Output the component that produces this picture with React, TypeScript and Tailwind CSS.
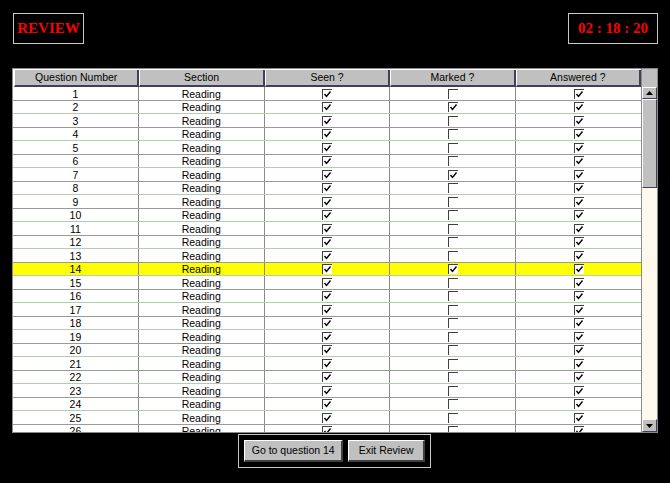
import React from 'react'

const ROWS = Array.from({ length: 26 }, (_, i) => i + 1)
const MARKED = [2, 7, 14]
const CURRENT = 14

function Check({ on }: { on: boolean }) {
  return (
    <span className="inline-block w-[10px] h-[10px] bg-white border-t border-l border-[#404040] relative">
      {on && (
        <svg width="9" height="9" viewBox="0 0 9 9" className="absolute left-0 top-0">
          <path d="M1.5 4 L3.5 6.5 L7.5 1.5" fill="none" stroke="#000" strokeWidth="1.4" />
        </svg>
      )}
    </span>
  )
}

function Cell({ children, last }: { children: React.ReactNode; last?: boolean }) {
  return (
    <div className={`flex-1 flex items-center justify-center pt-px ${last ? '' : 'border-r border-[#8a8a8a]'}`}>
      {children}
    </div>
  )
}

export default function App() {
  return (
    <div className="w-[670px] h-[483px] bg-black overflow-hidden text-[10.5px] text-black" style={{ fontFamily: '"Liberation Sans", Arial, sans-serif' }}>
      <div className="flex justify-between pl-[13px] pr-[12px] pt-[13px]">
        <div className="w-[71px] h-[31px] border border-[#c8c8c8] flex items-center justify-center text-[#ff0000] font-bold text-[15px]" style={{ fontFamily: '"Liberation Serif", "Times New Roman", serif' }}>
          REVIEW
        </div>
        <div className="w-[90px] h-[31px] border border-[#c8c8c8] flex items-center justify-center text-[#ff0000] font-bold text-[15px]" style={{ fontFamily: '"Liberation Serif", "Times New Roman", serif' }}>
          02 : 18 : 20
        </div>
      </div>

      <div className="ml-[12px] mt-[24px] w-[646px] h-[365px] border border-[#8a8a8a] bg-white flex">
        <div className="flex-1 flex flex-col overflow-hidden">
          <div className="h-[18px] shrink-0 flex bg-[#c0c0c0] border-t border-l border-white">
            {['Question Number', 'Section', 'Seen ?', 'Marked ?', 'Answered ?'].map((h) => (
              <div key={h} className="flex-1 flex items-center justify-center pt-px border-r-2 border-b-2 border-[#404058] border-l border-l-white">
                {h}
              </div>
            ))}
          </div>
          {ROWS.map((n) => {
            const cur = n === CURRENT
            return (
              <div
                key={n}
                className={`h-[13.5px] shrink-0 flex leading-none border-b ${n % 2 ? 'border-[#9a9a9a]' : 'border-[#b4ccb4]'} ${cur ? 'bg-[#ffff00]' : 'bg-white'}`}
              >
                <Cell>{n}</Cell>
                <Cell>Reading</Cell>
                <Cell><Check on /></Cell>
                <Cell><Check on={MARKED.includes(n)} /></Cell>
                <Cell last><Check on /></Cell>
              </div>
            )
          })}
        </div>

        <div className="w-[16px] shrink-0 flex flex-col bg-[#fff8ec] border-l border-[#8a8a8a]">
          <div className="h-[18px] bg-[#c0c0c0] shrink-0" />
          <div className="h-[12px] shrink-0 bg-[#c0c0c0] border-t border-l border-white border-r border-b border-r-[#404058] border-b-[#404058] flex items-center justify-center">
            <svg width="7" height="4" viewBox="0 0 7 4"><path d="M3.5 0 L7 4 L0 4 Z" fill="#000" /></svg>
          </div>
          <div className="h-[89px] shrink-0 bg-[#c0c0c0] border-t border-l border-white border-r border-b border-r-[#404058] border-b-[#404058]" />
          <div className="flex-1" />
          <div className="h-[13px] shrink-0 bg-[#c0c0c0] border-t border-l border-white border-r border-b border-r-[#404058] border-b-[#404058] flex items-center justify-center">
            <svg width="7" height="4" viewBox="0 0 7 4"><path d="M0 0 L7 0 L3.5 4 Z" fill="#000" /></svg>
          </div>
        </div>
      </div>

      <div className="ml-[238px] mt-[1px] w-[193px] h-[34px] border border-[#c8c8c8] flex items-center gap-[5px] px-[5px]">
        <button className="w-[100px] h-[22px] bg-[#c0c0c0] border-t border-l border-white border-r-2 border-b-2 border-r-[#404040] border-b-[#404040]">
          Go to question 14
        </button>
        <button className="w-[77px] h-[22px] bg-[#c0c0c0] border-t border-l border-white border-r-2 border-b-2 border-r-[#404040] border-b-[#404040]">
          Exit Review
        </button>
      </div>
    </div>
  )
}
